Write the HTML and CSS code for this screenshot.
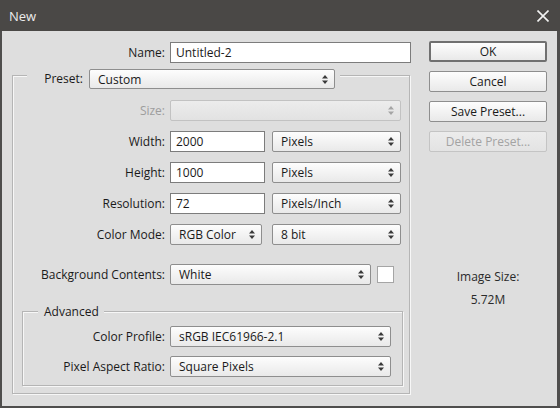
FILE: index.html
```html
<!DOCTYPE html>
<html>
<head>
<meta charset="utf-8">
<link rel="stylesheet" href="styles.css">
</head>
<body>
<div class="dialog">
  <div class="titlebar">
    <span class="title">New</span>
    <svg class="close" width="12" height="12" viewBox="0 0 12 12"><path d="M0.5 0.5L11.5 11.5M11.5 0.5L0.5 11.5" stroke="#f2f2f2" stroke-width="1.6"/></svg>
  </div>
  <div class="main">
    <div class="form">
      <div class="row name-row">
        <span class="lbl lbl-name">Name:</span>
        <div class="input w-name">Untitled-2</div>
      </div>
      <div class="group outer">
        <div class="legend preset-legend">
          <span class="lbl-inline">Preset:</span>
          <div class="select w-preset"><span>Custom</span><svg class="arr" width="6" height="9" viewBox="0 0 6 9"><path d="M3 0L6 3.5H0ZM3 9L0 5.5H6Z"/></svg></div>
        </div>
        <div class="rows">
          <div class="row">
            <span class="lbl disabled">Size:</span>
            <div class="select dis w-size"><span></span><svg class="arr" width="6" height="9" viewBox="0 0 6 9"><path d="M3 0L6 3.5H0ZM3 9L0 5.5H6Z"/></svg></div>
          </div>
          <div class="row">
            <span class="lbl">Width:</span>
            <div class="input w-num">2000</div>
            <div class="select w-unit"><span>Pixels</span><svg class="arr" width="6" height="9" viewBox="0 0 6 9"><path d="M3 0L6 3.5H0ZM3 9L0 5.5H6Z"/></svg></div>
          </div>
          <div class="row">
            <span class="lbl">Height:</span>
            <div class="input w-num">1000</div>
            <div class="select w-unit"><span>Pixels</span><svg class="arr" width="6" height="9" viewBox="0 0 6 9"><path d="M3 0L6 3.5H0ZM3 9L0 5.5H6Z"/></svg></div>
          </div>
          <div class="row">
            <span class="lbl">Resolution:</span>
            <div class="input w-num">72</div>
            <div class="select w-unit"><span>Pixels/Inch</span><svg class="arr" width="6" height="9" viewBox="0 0 6 9"><path d="M3 0L6 3.5H0ZM3 9L0 5.5H6Z"/></svg></div>
          </div>
          <div class="row">
            <span class="lbl">Color Mode:</span>
            <div class="select w-mode"><span>RGB Color</span><svg class="arr" width="6" height="9" viewBox="0 0 6 9"><path d="M3 0L6 3.5H0ZM3 9L0 5.5H6Z"/></svg></div>
            <div class="select w-unit"><span>8 bit</span><svg class="arr" width="6" height="9" viewBox="0 0 6 9"><path d="M3 0L6 3.5H0ZM3 9L0 5.5H6Z"/></svg></div>
          </div>
          <div class="row bg-row">
            <span class="lbl">Background Contents:</span>
            <div class="select w-bg"><span>White</span><svg class="arr" width="6" height="9" viewBox="0 0 6 9"><path d="M3 0L6 3.5H0ZM3 9L0 5.5H6Z"/></svg></div>
            <div class="swatch"></div>
          </div>
        </div>
        <div class="group adv">
          <div class="legend adv-legend">Advanced</div>
          <div class="row">
            <span class="lbl lbl-adv">Color Profile:</span>
            <div class="select w-adv"><span>sRGB IEC61966-2.1</span><svg class="arr" width="6" height="9" viewBox="0 0 6 9"><path d="M3 0L6 3.5H0ZM3 9L0 5.5H6Z"/></svg></div>
          </div>
          <div class="row">
            <span class="lbl lbl-adv">Pixel Aspect Ratio:</span>
            <div class="select w-adv"><span>Square Pixels</span><svg class="arr" width="6" height="9" viewBox="0 0 6 9"><path d="M3 0L6 3.5H0ZM3 9L0 5.5H6Z"/></svg></div>
          </div>
        </div>
      </div>
    </div>
    <div class="side">
      <div class="btn default">OK</div>
      <div class="btn">Cancel</div>
      <div class="btn">Save Preset...</div>
      <div class="btn dis">Delete Preset...</div>
      <div class="info">
        <div class="info-lbl">Image Size:</div>
        <div class="info-val">5.72M</div>
      </div>
    </div>
  </div>
</div>
</body>
</html>
```
FILE: styles.css
```css
* { box-sizing: border-box; }
html, body { margin: 0; padding: 0; }
body {
  width: 560px;
  height: 408px;
  overflow: hidden;
  font-family: "Open Sans", "DejaVu Sans", sans-serif;
  font-size: 12px;
  color: #1a1a1a;
  background: #dedede;
}
.dialog {
  width: 560px;
  height: 408px;
  background: #dedede;
  border-left: 2px solid #4f4e4d;
  border-right: 3px solid #4f4e4d;
  border-bottom: 2px solid #4f4e4d;
  display: flex;
  flex-direction: column;
}
.titlebar {
  height: 31px;
  margin: 0 -3px 0 -2px;
  background: #4a4846;
  display: flex;
  align-items: center;
  justify-content: space-between;
  padding: 0 11px 0 9px;
}
.title {
  color: #ececec;
  font-size: 13px;
  line-height: 16px;
}
.close { display: block; }
.main {
  display: flex;
  padding-top: 10px;
}
.form {
  width: 409px;
  padding-left: 10px;
  display: flex;
  flex-direction: column;
}
.row {
  display: flex;
  align-items: center;
  height: 21px;
}
.lbl {
  width: 152px;
  margin-right: 5px;
  text-align: right;
  line-height: 16px;
  white-space: nowrap;
}
.lbl-name { width: 153px; }
.lbl-adv { width: 142px; }
.lbl.disabled { color: #9d9d9d; }
.name-row { margin-top: 1px; }
.input {
  height: 21px;
  background: #fff;
  border: 1px solid #7c7c7c;
  padding: 0 5px;
  line-height: 19px;
  white-space: nowrap;
}
.w-name { width: 241px; }
.w-num { width: 95px; margin-right: 7px; }
.select {
  height: 21px;
  border: 1px solid #8e8e8e;
  border-radius: 2px;
  background: linear-gradient(#fdfdfd, #e9e9e9);
  display: flex;
  align-items: center;
  justify-content: space-between;
  padding: 0 6px 0 8px;
  line-height: 19px;
  white-space: nowrap;
}
.select .arr { fill: #3a3a3a; flex: none; }
.select.dis {
  border-color: #c2c2c2;
  background: linear-gradient(#ececec, #e2e2e2);
}
.select.dis .arr { fill: #a5a5a5; }
.w-preset { width: 246px; height: 20px; }
.w-size { width: 231px; }
.w-unit { width: 129px; }
.w-mode { width: 92px; margin-right: 10px; }
.w-bg { width: 201px; margin-right: 6px; }
.w-adv { width: 221px; }
.swatch {
  width: 17px;
  height: 17px;
  background: #fff;
  border: 1px solid #a5a5a5;
}
.group {
  border: 1px solid #b5b5b5;
  box-shadow: inset 1px 1px 0 #f7f7f7, 1px 1px 0 #f7f7f7;
  display: flex;
  flex-direction: column;
}
.outer {
  width: 398px;
  margin-top: 12px;
  padding-bottom: 7px;
}
.legend {
  align-self: flex-start;
  background: #dedede;
  display: flex;
  align-items: center;
}
.preset-legend {
  margin: -7px 0 0 14px;
  padding: 0 5px 0 5px;
  height: 20px;
}
.lbl-inline {
  width: 51px;
  text-align: right;
  margin-right: 6px;
  line-height: 16px;
}
.rows {
  display: flex;
  flex-direction: column;
  gap: 10px;
  margin-top: 11px;
}
.bg-row { margin-top: 9px; }
.adv {
  margin: 26px 6px 0 9px;
  padding-bottom: 8px;
  gap: 9px;
}
.adv-legend {
  margin: -8px 0 0 15px;
  padding: 0 5px 0 6px;
  height: 16px;
  line-height: 16px;
}
.adv .legend + .row { margin-top: -3px; }
.side {
  margin-left: 18px;
  width: 118px;
  display: flex;
  flex-direction: column;
  gap: 9px;
}
.btn {
  height: 21px;
  border: 1px solid #8e8e8e;
  border-radius: 2px;
  background: linear-gradient(#fdfdfd, #e9e9e9);
  text-align: center;
  line-height: 19px;
  white-space: nowrap;
}
.btn.default {
  border: 2px solid #707070;
  line-height: 17px;
}
.btn.dis {
  color: #a3a3a3;
  border-color: #c4c4c4;
  background: linear-gradient(#ececec, #e3e3e3);
}
.info {
  margin-top: 109px;
  text-align: center;
  color: #2a2a2a;
}
.info-lbl { line-height: 14px; }
.info-val { line-height: 14px; margin-top: 9px; }
```
